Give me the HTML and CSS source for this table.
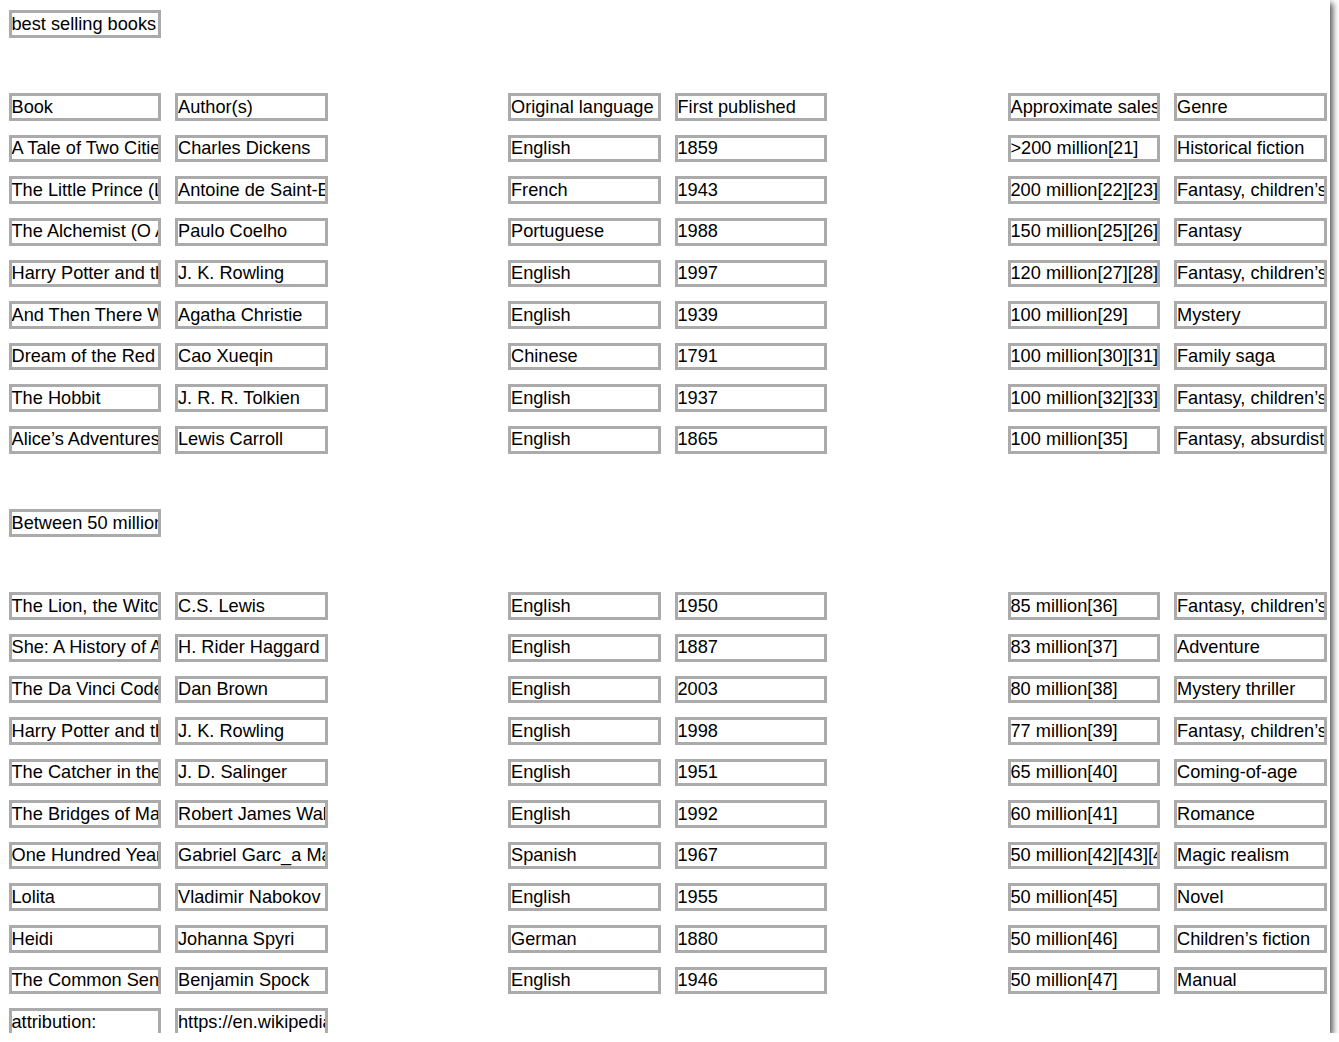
FILE: index.html
```html
<!DOCTYPE html>
<html lang="en">
<head>
<meta charset="utf-8">
<title>best selling books</title>
<link rel="stylesheet" href="styles.css">
</head>
<body>
<div class="page">
  <div class="sheet">
    <div class="c">best selling books</div><div></div><div></div><div></div><div></div><div></div><div></div><div></div>
    <div></div><div></div><div></div><div></div><div></div><div></div><div></div><div></div>

    <div class="c">Book</div><div class="c">Author(s)</div><div></div><div class="c">Original language</div><div class="c">First published</div><div></div><div class="c">Approximate sales</div><div class="c">Genre</div>
    <div class="c">A Tale of Two Cities</div><div class="c">Charles Dickens</div><div></div><div class="c">English</div><div class="c">1859</div><div></div><div class="c">&gt;200 million[21]</div><div class="c">Historical fiction</div>
    <div class="c">The Little Prince (Le Petit Prince)</div><div class="c">Antoine de Saint-Exupéry</div><div></div><div class="c">French</div><div class="c">1943</div><div></div><div class="c">200 million[22][23]</div><div class="c">Fantasy, children’s fiction</div>
    <div class="c">The Alchemist (O Alquimista)</div><div class="c">Paulo Coelho</div><div></div><div class="c">Portuguese</div><div class="c">1988</div><div></div><div class="c">150 million[25][26]</div><div class="c">Fantasy</div>
    <div class="c">Harry Potter and the Philosopher’s Stone</div><div class="c">J. K. Rowling</div><div></div><div class="c">English</div><div class="c">1997</div><div></div><div class="c">120 million[27][28]</div><div class="c">Fantasy, children’s fiction</div>
    <div class="c">And Then There Were None</div><div class="c">Agatha Christie</div><div></div><div class="c">English</div><div class="c">1939</div><div></div><div class="c">100 million[29]</div><div class="c">Mystery</div>
    <div class="c">Dream of the Red Chamber</div><div class="c">Cao Xueqin</div><div></div><div class="c">Chinese</div><div class="c">1791</div><div></div><div class="c">100 million[30][31]</div><div class="c">Family saga</div>
    <div class="c">The Hobbit</div><div class="c">J. R. R. Tolkien</div><div></div><div class="c">English</div><div class="c">1937</div><div></div><div class="c">100 million[32][33]</div><div class="c">Fantasy, children’s fiction</div>
    <div class="c">Alice’s Adventures in Wonderland</div><div class="c">Lewis Carroll</div><div></div><div class="c">English</div><div class="c">1865</div><div></div><div class="c">100 million[35]</div><div class="c">Fantasy, absurdist fiction</div>
    <div></div><div></div><div></div><div></div><div></div><div></div><div></div><div></div>

    <div class="c">Between 50 million and 100 million copies</div><div></div><div></div><div></div><div></div><div></div><div></div><div></div>
    <div></div><div></div><div></div><div></div><div></div><div></div><div></div><div></div>

    <div class="c">The Lion, the Witch and the Wardrobe</div><div class="c">C.S. Lewis</div><div></div><div class="c">English</div><div class="c">1950</div><div></div><div class="c">85 million[36]</div><div class="c">Fantasy, children’s fiction</div>
    <div class="c">She: A History of Adventure</div><div class="c">H. Rider Haggard</div><div></div><div class="c">English</div><div class="c">1887</div><div></div><div class="c">83 million[37]</div><div class="c">Adventure</div>
    <div class="c">The Da Vinci Code</div><div class="c">Dan Brown</div><div></div><div class="c">English</div><div class="c">2003</div><div></div><div class="c">80 million[38]</div><div class="c">Mystery thriller</div>
    <div class="c">Harry Potter and the Chamber of Secrets</div><div class="c">J. K. Rowling</div><div></div><div class="c">English</div><div class="c">1998</div><div></div><div class="c">77 million[39]</div><div class="c">Fantasy, children’s fiction</div>
    <div class="c">The Catcher in the Rye</div><div class="c">J. D. Salinger</div><div></div><div class="c">English</div><div class="c">1951</div><div></div><div class="c">65 million[40]</div><div class="c">Coming-of-age</div>
    <div class="c">The Bridges of Madison County</div><div class="c">Robert James Waller</div><div></div><div class="c">English</div><div class="c">1992</div><div></div><div class="c">60 million[41]</div><div class="c">Romance</div>
    <div class="c">One Hundred Years of Solitude</div><div class="c">Gabriel Garc_a Márquez</div><div></div><div class="c">Spanish</div><div class="c">1967</div><div></div><div class="c">50 million[42][43][44]</div><div class="c">Magic realism</div>
    <div class="c">Lolita</div><div class="c">Vladimir Nabokov</div><div></div><div class="c">English</div><div class="c">1955</div><div></div><div class="c">50 million[45]</div><div class="c">Novel</div>
    <div class="c">Heidi</div><div class="c">Johanna Spyri</div><div></div><div class="c">German</div><div class="c">1880</div><div></div><div class="c">50 million[46]</div><div class="c">Children’s fiction</div>
    <div class="c">The Common Sense Book of Baby and Child Care</div><div class="c">Benjamin Spock</div><div></div><div class="c">English</div><div class="c">1946</div><div></div><div class="c">50 million[47]</div><div class="c">Manual</div>
    <div class="c">attribution:</div><div class="c">https://en.wikipedia.org/wiki/List_of_best-selling_books</div><div></div><div></div><div></div><div></div><div></div><div></div>
  </div>
</div>
</body>
</html>
```
FILE: styles.css
```css
html, body {
  margin: 0;
  padding: 0;
  background: #ffffff;
}

.page {
  width: 1330px;
  height: 1033px;
  background: #ffffff;
  box-shadow: 3px 3px 6px rgba(0, 0, 0, 0.65);
  overflow: hidden;
}

.sheet {
  display: grid;
  grid-template-columns: repeat(8, 152.5px);
  grid-auto-rows: 27.6px;
  column-gap: 14px;
  row-gap: 14px;
  padding: 10px 0 0 8.5px;
  font-family: "Liberation Sans", Arial, sans-serif;
  font-size: 18.2px;
  color: #000;
}

.c {
  box-sizing: border-box;
  border: 3px solid #ababab;
  padding: 0.5px 0 0 0;
  line-height: 21px;
  white-space: nowrap;
  overflow: hidden;
  background: #fff;
}
```
